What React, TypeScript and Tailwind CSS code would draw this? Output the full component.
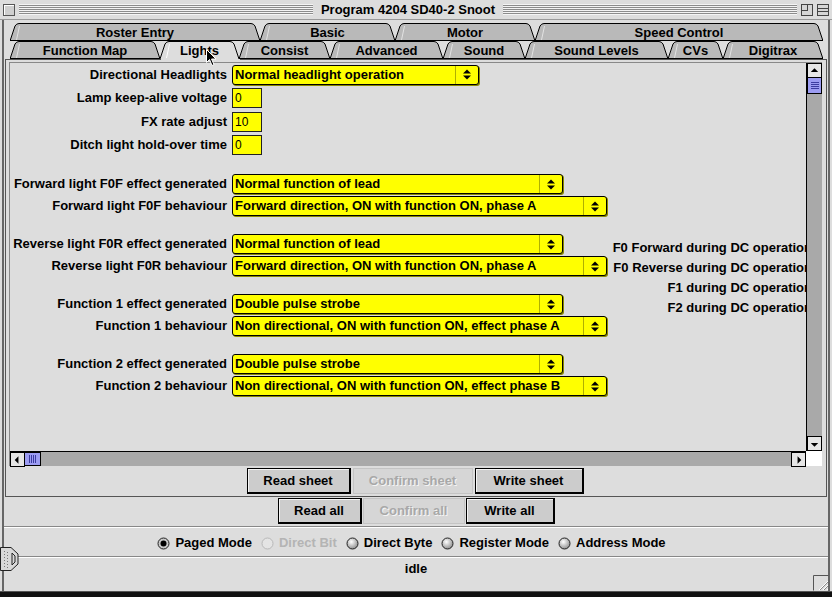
import { ReactNode } from 'react';

const font = 'font-["Liberation_Sans",Arial,sans-serif]';

const row1Tabs = [
  { label: 'Roster Entry', w: 250 },
  { label: 'Basic', w: 135 },
  { label: 'Motor', w: 140 },
  { label: 'Speed Control', w: 288 },
];

const row2Tabs = [
  { label: 'Function Map', w: 150 },
  { label: 'Lights', w: 79, active: true },
  { label: 'Consist', w: 91 },
  { label: 'Advanced', w: 113 },
  { label: 'Sound', w: 82 },
  { label: 'Sound Levels', w: 143 },
  { label: 'CVs', w: 55 },
  { label: 'Digitrax', w: 100 },
];

function Tab({ label, w, active }: { label: string; w: number; active?: boolean }) {
  const h = 18;
  const d = `M0,${h} L5,3 Q6.5,0.5 9,0.5 L${w - 9},0.5 Q${w - 6.5},0.5 ${w - 5},3 L${w},${h}`;
  return (
    <div className="relative h-[18px] shrink-0 flex items-center justify-center" style={{ width: w }}>
      <svg className="absolute inset-0" width={w} height={h}>
        <path d={d + ' Z'} fill={active ? '#dddddd' : '#b9b9b9'} />
        <path d={d} fill="none" stroke="#000" strokeWidth="1" />
        <path d={`M6.5,${h - 1} L9.5,3`} stroke="#fff" strokeWidth="1" opacity={active ? 1 : 0.6} />
        {!active && <line x1="0" y1={h - 0.5} x2={w} y2={h - 0.5} stroke="#000" />}
      </svg>
      <span className="relative text-[13px] font-bold text-black pt-[1px]">{label}</span>
    </div>
  );
}

function UpDown() {
  return (
    <svg width="8" height="11" viewBox="0 0 8 11">
      <path d="M0,4.5 L4,0.5 L8,4.5 Z" fill="#000" />
      <path d="M0,6.5 L4,10.5 L8,6.5 Z" fill="#000" />
    </svg>
  );
}

function Combo({ value, className }: { value: string; className: string }) {
  return (
    <div className={`${className} h-[20px] flex bg-[#ffff00] border border-black rounded-[3px] shadow-[1px_1px_0_#8a8a00]`}>
      <div className="flex-1 pl-[2px] leading-[18px] font-bold text-[13px] whitespace-nowrap overflow-hidden">{value}</div>
      <div className="w-[23px] border-l border-[#b0b000] flex items-center justify-center">
        <UpDown />
      </div>
    </div>
  );
}

function Field({ value }: { value: string }) {
  return (
    <div className="w-[30px] h-[20px] bg-[#ffff00] border border-[#222] pl-[2px] leading-[18px] text-[12px] font-normal">
      {value}
    </div>
  );
}

function Row({ label, h, children }: { label: string; h: string; children: ReactNode }) {
  return (
    <div className={`flex items-center ${h}`}>
      <div className="w-[222px] text-right pr-[5px] whitespace-nowrap text-[13px] font-bold">{label}</div>
      {children}
    </div>
  );
}

function Btn({ label, className, disabled }: { label: string; className: string; disabled?: boolean }) {
  if (disabled) {
    return (
      <div className={`${className} h-[26px] flex items-center justify-center border border-[#c4c4c4] bg-[#d6d6d6] text-[13px] font-bold text-[#a8a8a8] [text-shadow:1px_1px_0_#f4f4f4]`}>
        {label}
      </div>
    );
  }
  return (
    <div className={`${className} h-[26px] border border-black border-r-2 border-b-2 bg-[#cccccc] shadow-[inset_1px_1px_0_#f4f4f4] flex items-center justify-center text-[13px] font-bold`}>
      {label}
    </div>
  );
}

function Radio({ label, checked, disabled }: { label: string; checked?: boolean; disabled?: boolean }) {
  return (
    <div className="flex items-center gap-[5px]">
      <svg width="13" height="13" viewBox="0 0 13 13">
        <defs>
          <radialGradient id="rg" cx="0.4" cy="0.35" r="0.7">
            <stop offset="0" stopColor="#ffffff" />
            <stop offset="1" stopColor="#8a8a8a" />
          </radialGradient>
        </defs>
        {disabled ? (
          <circle cx="6.5" cy="6.5" r="5.5" fill="#e4e4e4" stroke="#b8b8b8" />
        ) : (
          <circle cx="6.5" cy="6.5" r="5.5" fill={checked ? '#c8c8c8' : 'url(#rg)'} stroke="#222" />
        )}
        {checked && <circle cx="6.5" cy="6.5" r="3" fill="#000" />}
      </svg>
      <span className={`text-[13px] font-bold whitespace-nowrap ${disabled ? 'text-[#b4b4b4]' : 'text-black'}`}>{label}</span>
    </div>
  );
}

function ArrowBtn({ dir }: { dir: 'up' | 'down' | 'left' | 'right' }) {
  const pts = {
    up: '3,8 7,4 11,8',
    down: '3,6 7,10 11,6',
    left: '8,3 4,7 8,11',
    right: '6,3 10,7 6,11',
  }[dir];
  return (
    <div className="w-[15px] h-[15px] bg-[#e6e6e6] border border-black flex items-center justify-center shrink-0">
      <svg width="14" height="14" viewBox="0 0 14 14">
        <polygon points={pts} fill="#000" />
      </svg>
    </div>
  );
}

export default function App() {
  return (
    <div className={`${font} relative w-[832px] h-[597px] bg-[#dddddd] text-black overflow-hidden select-none`}>
      {/* title bar */}
      <div className="h-[20px] flex items-center px-[3px] gap-[4px] border-b border-[#999]">
        <div className="w-[12px] h-[12px] border border-[#555] bg-[#cfcfcf] shadow-[inset_1px_1px_0_#fff] shrink-0" />
        <div className="flex-1 h-[11px] bg-[repeating-linear-gradient(to_bottom,#f4f4f4_0px,#f4f4f4_1px,#8c8c8c_1px,#8c8c8c_2px)]" />
        <div className="text-[13px] font-bold px-[4px] whitespace-nowrap">Program 4204 SD40-2 Snoot</div>
        <div className="flex-1 h-[11px] bg-[repeating-linear-gradient(to_bottom,#f4f4f4_0px,#f4f4f4_1px,#8c8c8c_1px,#8c8c8c_2px)]" />
        <div className="w-[12px] h-[12px] border border-[#444] bg-[#d6d6d6] relative shrink-0">
          <div className="absolute left-0 top-0 w-[6px] h-[6px] border-r border-b border-[#444]" />
        </div>
        <div className="w-[12px] h-[12px] border border-[#444] bg-[#d6d6d6] flex flex-col justify-center gap-[2px] shrink-0">
          <div className="h-px bg-[#444]" />
          <div className="h-px bg-[#444]" />
        </div>
      </div>

      {/* window body */}
      <div className="h-[571px] border-l-2 border-r-2 border-[#666] mx-[2px] flex flex-col">
        {/* tabs */}
        <div className="pt-[3px] pl-[6px]">
          <div className="flex">
            {row1Tabs.map((t) => (
              <Tab key={t.label} label={t.label} w={t.w} />
            ))}
          </div>
          <div className="flex">
            {row2Tabs.map((t) => (
              <Tab key={t.label} label={t.label} w={t.w} active={t.active} />
            ))}
          </div>
        </div>

        {/* tab panel */}
        <div className="h-[438px] mx-[1px] border border-t-0 border-[#555] relative">
          <div className="absolute left-0 right-0 top-0 h-px bg-[#555]" />
          <div className="absolute left-[155px] w-[79px] top-0 h-px bg-[#dddddd]" />
          {/* scroll pane */}
          <div className="mt-[3px] ml-[3px] mr-[4px] flex flex-col border-l border-t border-[#888]">
            <div className="flex h-[388px]">
              <div className="w-[796px] overflow-hidden">
                <div className="w-[802px] flex">
                  <div className="flex-1">
                    <Row label="Directional Headlights" h="h-[23px]">
                      <Combo value="Normal headlight operation" className="w-[247px]" />
                    </Row>
                    <Row label="Lamp keep-alive voltage" h="h-[24px]">
                      <Field value="0" />
                    </Row>
                    <Row label="FX rate adjust" h="h-[23px]">
                      <Field value="10" />
                    </Row>
                    <Row label="Ditch light hold-over time" h="h-[24px]">
                      <Field value="0" />
                    </Row>
                    <div className="h-[16px]" />
                    <Row label="Forward light F0F effect generated" h="h-[22px]">
                      <Combo value="Normal function of lead" className="w-[331px]" />
                    </Row>
                    <Row label="Forward light F0F behaviour" h="h-[22px]">
                      <Combo value="Forward direction, ON with function ON, phase A" className="w-[375px]" />
                    </Row>
                    <div className="h-[16px]" />
                    <Row label="Reverse light F0R effect generated" h="h-[22px]">
                      <Combo value="Normal function of lead" className="w-[331px]" />
                    </Row>
                    <Row label="Reverse light F0R behaviour" h="h-[22px]">
                      <Combo value="Forward direction, ON with function ON, phase A" className="w-[375px]" />
                    </Row>
                    <div className="h-[16px]" />
                    <Row label="Function 1 effect generated" h="h-[22px]">
                      <Combo value="Double pulse strobe" className="w-[331px]" />
                    </Row>
                    <Row label="Function 1 behaviour" h="h-[22px]">
                      <Combo value="Non directional, ON with function ON, effect phase A" className="w-[375px]" />
                    </Row>
                    <div className="h-[16px]" />
                    <Row label="Function 2 effect generated" h="h-[22px]">
                      <Combo value="Double pulse strobe" className="w-[331px]" />
                    </Row>
                    <Row label="Function 2 behaviour" h="h-[22px]">
                      <Combo value="Non directional, ON with function ON, effect phase B" className="w-[375px]" />
                    </Row>
                  </div>
                  <div className="pt-[175px] text-right text-[13px] font-bold whitespace-nowrap">
                    <div className="h-[20px] leading-[20px]">F0 Forward during DC operation</div>
                    <div className="h-[20px] leading-[20px]">F0 Reverse during DC operation</div>
                    <div className="h-[20px] leading-[20px]">F1 during DC operation</div>
                    <div className="h-[20px] leading-[20px]">F2 during DC operation</div>
                  </div>
                </div>
              </div>
              {/* vertical scrollbar */}
              <div className="w-[16px] flex flex-col bg-[#a9a9a9] border-l border-black">
                <ArrowBtn dir="up" />
                <div className="h-[16px] bg-[#9c9cf2] border border-black border-t-0 flex flex-col items-center justify-center gap-[1px]">
                  {[0, 1, 2, 3].map((i) => (
                    <div key={i} className="w-[8px] h-px bg-[#3c3ca0]" />
                  ))}
                </div>
                <div className="flex-1" />
                <ArrowBtn dir="down" />
              </div>
            </div>
            {/* horizontal scrollbar */}
            <div className="flex h-[15px]">
              <div className="w-[796px] flex bg-[#a9a9a9] border-t border-black">
                <ArrowBtn dir="left" />
                <div className="w-[16px] bg-[#9c9cf2] border border-black border-l-0 flex items-center justify-center gap-[1px]">
                  {[0, 1, 2, 3].map((i) => (
                    <div key={i} className="h-[8px] w-px bg-[#3c3ca0]" />
                  ))}
                </div>
                <div className="flex-1" />
                <ArrowBtn dir="right" />
              </div>
              <div className="w-[16px] bg-white" />
            </div>
          </div>
          {/* sheet buttons */}
          <div className="mt-[2px] flex justify-center gap-[2px] pr-[2px]">
            <Btn label="Read sheet" className="w-[104px]" />
            <Btn label="Confirm sheet" className="w-[120px]" disabled />
            <Btn label="Write sheet" className="w-[109px]" />
          </div>
        </div>

        {/* all buttons */}
        <div className="h-[30px] flex justify-center gap-[1px] pt-[1px] border-b border-[#888]">
          <Btn label="Read all" className="w-[84px]" />
          <Btn label="Confirm all" className="w-[102px]" disabled />
          <Btn label="Write all" className="w-[89px]" />
        </div>
        <div className="h-[30px] pt-[2px] border-t border-white border-b border-b-[#888] flex items-center justify-center gap-[9px] pr-[9px]">
          <Radio label="Paged Mode" checked />
          <Radio label="Direct Bit" disabled />
          <Radio label="Direct Byte" />
          <Radio label="Register Mode" />
          <Radio label="Address Mode" />
        </div>
        <div className="flex-1 border-t border-white flex justify-center pt-[1px]">
          <span className="text-[13px] font-bold">idle</span>
        </div>
      </div>
      <div className="h-[6px] bg-[#111] border-t border-[#555]" />

      {/* drawer handle */}
      <svg className="absolute left-0 top-[547px]" width="19" height="24" viewBox="0 0 19 24">
        <path d="M0.5,0.5 L11,0.5 L18,7 L18,17 L11,23.5 L0.5,23.5 Z" fill="#d8d8d8" stroke="#222" />
        <path d="M12,6 L15,9 L15,15 L12,18 Z" fill="none" stroke="#222" />
        {[4, 7, 10, 13, 16, 19].map((y) => (
          <g key={y}>
            <rect x="4" y={y} width="1" height="1" fill="#777" />
            <rect x="7" y={y + 1} width="1" height="1" fill="#777" />
          </g>
        ))}
      </svg>

      {/* grow box */}
      <svg className="absolute left-[813px] top-[575px]" width="16" height="16" viewBox="0 0 16 16">
        <path d="M0.5,15.5 L0.5,0.5 L15.5,0.5" fill="none" stroke="#555" />
        {[6, 10, 14].map((o) => (
          <g key={o}>
            <line x1={o} y1="15" x2="15" y2={o} stroke="#fff" />
            <line x1={o + 1} y1="15" x2="15" y2={o + 1} stroke="#888" />
          </g>
        ))}
      </svg>

      {/* mouse pointer */}
      <svg className="absolute left-[206px] top-[49px]" width="12" height="18" viewBox="0 0 12 18">
        <path d="M0.5,0.5 L0.5,13.5 L3.5,10.5 L6,16.5 L8,15.5 L5.5,10 L10,10 Z" fill="#000" stroke="#fff" />
      </svg>
    </div>
  );
}
